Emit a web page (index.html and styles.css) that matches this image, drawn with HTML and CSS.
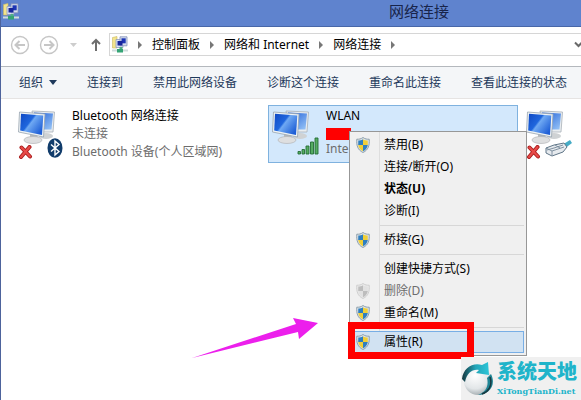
FILE: index.html
```html
<!DOCTYPE html>
<html lang="zh-CN">
<head>
<meta charset="utf-8">
<title>网络连接</title>
<link rel="stylesheet" href="styles.css">
</head>
<body>
<svg class="defs" aria-hidden="true">
  <defs>
    <linearGradient id="screen" x1="0" y1="0" x2="1" y2=".7">
      <stop offset="0" stop-color="#0f48c4"/><stop offset=".45" stop-color="#1f66dd"/><stop offset=".52" stop-color="#6fa9f3"/><stop offset="1" stop-color="#1f5fd6"/>
    </linearGradient>
    <linearGradient id="screen-back" x1="0" y1="0" x2="1" y2="1">
      <stop offset="0" stop-color="#1c5cd6"/><stop offset="1" stop-color="#9cc8f8"/>
    </linearGradient>
    <radialGradient id="ball" cx=".4" cy=".3" r=".8">
      <stop offset="0" stop-color="#ffffff"/><stop offset=".6" stop-color="#e2e6e8"/><stop offset="1" stop-color="#8f999d"/>
    </radialGradient>
    <linearGradient id="swoosh" x1="0" y1="0" x2="1" y2="0">
      <stop offset="0" stop-color="#16363e"/><stop offset=".5" stop-color="#23a5b8"/><stop offset="1" stop-color="#2cc5d8"/>
    </linearGradient>
    <symbol id="monitors" viewBox="0 0 38 34">
      <ellipse cx="28" cy="26" rx="7" ry="3" fill="#cfd2d4"/>
      <path d="M14 1 36.500 2 35 22 17 22Z" fill="#e9edf0" stroke="#a8b0b8" stroke-width=".8"/>
      <path d="M16 2.500 35 3.500 33.500 19.500 18 19.500Z" fill="url(#screen-back)"/>
      <path d="M12 23h7l1 7h-8Z" fill="#b6babd"/>
      <ellipse cx="15" cy="30" rx="9" ry="3.500" fill="#dedfe0" stroke="#b3b5b7" stroke-width=".7"/>
      <path d="M1.500 2 27 4 25.500 27 .5 22Z" fill="#eff3f5" stroke="#98a4b0" stroke-width=".8"/>
      <path d="M3 3.800 25.300 5.500 24 25 2.200 20.500Z" fill="url(#screen)"/>
    </symbol>
    <symbol id="cross" viewBox="0 0 14 14">
      <path d="M3 2.500 11.500 11.500M11 2 2.500 12" stroke="#a81d1d" stroke-width="4" stroke-linecap="round"/>
      <path d="M3 2.500 11.500 11.500M11 2 2.500 12" stroke="#e84a48" stroke-width="2.200" stroke-linecap="round"/>
    </symbol>
    <symbol id="shield" viewBox="0 0 14 16">
      <path d="M7 .5C5 2 3 2.300 .8 2.200.3 8 1.500 13 7 15.500 12.500 13 13.700 8 13.200 2.200 11 2.300 9 2 7 .5Z" fill="#dce3e8" stroke="#8497a5" stroke-width=".9"/>
      <path d="M7 2.300C5.500 3.300 4 3.600 2.300 3.600L2.200 8H7Z" fill="#2f7fc0"/>
      <path d="M7 2.300C8.500 3.300 10 3.600 11.700 3.600L11.800 8H7Z" fill="#f0cf38"/>
      <path d="M2.200 8C2.700 11 4.300 13 7 14.200V8Z" fill="#f0cf38"/>
      <path d="M11.800 8C11.300 11 9.700 13 7 14.200V8Z" fill="#2f7fc0"/>
    </symbol>
    <symbol id="network" viewBox="0 0 16 17">
      <path d="M.5 1.500 5 .5V12H.5Z" fill="#f3e48b" stroke="#c9b860" stroke-width=".6"/>
      <path d="M4 3.500h7v8H4Z" fill="#dce3f2" stroke="#8e9ac0" stroke-width=".8"/>
      <path d="M8 .8h7v9H8Z" fill="#d4dced" stroke="#8390b8" stroke-width=".8"/>
      <path d="M9.500 2.300h4.200v5H9.500Z" fill="#1d35b5"/>
      <path d="M5.500 5h5v4.500h-5Z" fill="#17259a"/>
      <path d="M7.500 11h3v2.500h-3Z" fill="#4fae83"/>
      <path d="M0 13.500h16v2H0Z" fill="#cfdcdc"/>
      <path d="M5 13h6v3.500H5Z" fill="#35a475"/>
    </symbol>
  </defs>
</svg>

<div class="window">
  <header class="titlebar">
    <svg class="title-icon" aria-hidden="true"><use href="#network"/></svg>
    <h1 class="title">网络连接</h1>
  </header>

  <nav class="nav">
    <button class="round" aria-label="后退"><svg viewBox="0 0 20 20"><circle cx="10" cy="10" r="8.500"/><path d="M15 10H6M9.500 6 5.500 10l4 4"/></svg></button>
    <button class="round" aria-label="前进"><svg viewBox="0 0 20 20"><circle cx="10" cy="10" r="8.500"/><path d="M5 10h9M10.500 6l4 4-4 4"/></svg></button>
    <button class="recent" aria-label="最近位置"><svg viewBox="0 0 7 4"><path d="M0 0h7L3.500 4Z"/></svg></button>
    <button class="up" aria-label="上移"><svg viewBox="0 0 10 14"><path d="M5 13V2M1 6l4-4 4 4"/></svg></button>
    <div class="address">
      <svg class="address-icon" aria-hidden="true"><use href="#network"/></svg>
      <i class="tri"></i><a href="#">控制面板</a>
      <i class="tri"></i><a href="#">网络和 Internet</a>
      <i class="tri"></i><a href="#">网络连接</a>
      <i class="tri"></i>
      <button class="history" aria-label="以前的位置"><svg viewBox="0 0 9 7"><path d="M1 1.500l3.500 3.500L8 1.500"/></svg></button>
    </div>
  </nav>

  <div class="toolbar">
    <button class="organize">组织<svg viewBox="0 0 8 5" aria-hidden="true"><path d="M0 0h8L4 5Z"/></svg></button>
    <button>连接到</button>
    <button>禁用此网络设备</button>
    <button>诊断这个连接</button>
    <button>重命名此连接</button>
    <button>查看此连接的状态</button>
  </div>

  <main class="content">
    <div class="tiles">
      <article class="tile">
        <div class="icon">
          <svg class="monitors"><use href="#monitors"/></svg>
          <svg class="badge-left"><use href="#cross"/></svg>
          <svg class="badge-bluetooth" viewBox="0 0 16 20"><ellipse cx="8" cy="10" rx="7.500" ry="9.800" fill="#113c6b"/><path d="M4 6.500l8 7L8 17V3l4 3.500-8 7" fill="none" stroke="#fff" stroke-width="1.400"/></svg>
        </div>
        <div class="info"><p class="name">Bluetooth 网络连接</p><p>未连接</p><p>Bluetooth 设备(个人区域网)</p></div>
      </article>
      <article class="tile selected">
        <div class="icon">
          <svg class="monitors"><use href="#monitors"/></svg>
          <svg class="badge-signal" viewBox="0 0 22 18"><g fill="#55ab62" stroke="#246d35" stroke-width=".9"><path d="M1 14.500h2.500v2.500H1ZM5 12.500h2.500V17H5ZM9 9h3v8H9ZM13.500 5h3v12h-3ZM18 1h3v16h-3Z"/></g></svg>
        </div>
        <div class="info"><p class="name">WLAN</p><p><span class="redacted"></span></p><p>Inte</p></div>
      </article>
      <article class="tile">
        <div class="icon">
          <svg class="monitors"><use href="#monitors"/></svg>
          <svg class="badge-left"><use href="#cross"/></svg>
          <svg class="badge-plug" viewBox="0 0 27 17"><path d="M17 5 25 0l2 3-8 6Z" fill="#45abc5"/><path d="M1 8l8-3 10-2 3 4-4 5-11 4-6-3Z" fill="#e6eaee" stroke="#5f7587" stroke-width="1"/><path d="M2 10l7-2 9-3M7 15V11l12-4M1 8l6 3M10 5l5 3" fill="none" stroke="#76899a" stroke-width=".9"/></svg>
        </div>
        <div class="info"><p class="name">以太网</p></div>
      </article>
    </div>

    <svg class="pointer" viewBox="0 0 126 42" aria-hidden="true"><path d="M0 41 104 7 101 1 126 6 107 22 106 15Z"/></svg>

    <div class="menu" role="menu">
      <button role="menuitem"><svg><use href="#shield"/></svg>禁用(B)</button>
      <button role="menuitem">连接/断开(O)</button>
      <button role="menuitem" class="default">状态(U)</button>
      <button role="menuitem">诊断(I)</button>
      <hr>
      <button role="menuitem"><svg><use href="#shield"/></svg>桥接(G)</button>
      <hr>
      <button role="menuitem">创建快捷方式(S)</button>
      <button role="menuitem" disabled><svg><use href="#shield"/></svg>删除(D)</button>
      <button role="menuitem"><svg><use href="#shield"/></svg>重命名(M)</button>
      <hr>
      <button role="menuitem" class="active"><svg><use href="#shield"/></svg>属性(R)</button>
      <span class="highlight"></span>
    </div>

    <aside class="brand">
      <svg viewBox="0 0 34 36" aria-hidden="true">
        <circle cx="17" cy="20" r="14" fill="url(#ball)"/>
        <path d="M1 18C2 7 12 1 21 4L27 1 28 14 15 12 18 9C11 8 6 12 4 21Z" fill="url(#swoosh)"/>
        <path d="M30 13C36 25 27 34 17 34 25 31 28 25 26 17Z" fill="#1e8494"/>
        <path d="M29 16C32 25 27 31 21 33" fill="none" stroke="#183940" stroke-width="1.500"/>
      </svg>
      <div><strong>系统天地</strong><small>XiTongTianDi.net</small></div>
    </aside>
  </main>
</div>
</body>
</html>
```
FILE: styles.css
```css
* { box-sizing: border-box; }
body {
  margin: 0;
  overflow: hidden;
  background: #fff;
  color: #000;
  font: 12px/18px "Noto Sans", "Noto Sans CJK SC", sans-serif;
}
p, h1 { margin: 0; }
svg { display: block; flex: none; }
button {
  display: flex;
  align-items: center;
  flex: none;
  padding: 0;
  border: 0;
  background: none;
  color: inherit;
  font: inherit;
  white-space: nowrap;
}
a { color: inherit; text-decoration: none; white-space: nowrap; }
.defs { position: absolute; width: 0; height: 0; }

.window {
  display: flex;
  flex-direction: column;
  min-height: 100vh;
  border-left: 1px solid #4d639c;
}

.titlebar {
  display: flex;
  align-items: center;
  height: 27px;
  padding: 0 0 4px 2px;
  background: #5f83ce;
  border-bottom: 1px solid #4867a8;
}
.title-icon { width: 16px; height: 17px; }
.title {
  margin-left: 370px;
  color: #18244a;
  font-size: 15px;
  font-weight: 400;
  line-height: 22px;
  white-space: nowrap;
}

.nav { display: flex; align-items: center; height: 39px; padding: 0 0 4px 9px; }
.round { margin-right: 9px; }
.round svg { width: 20px; height: 20px; fill: none; stroke: #c6c6c6; stroke-width: 1.400; }
.round path { stroke-width: 2; }
.recent { margin-left: 2px; }
.recent svg { width: 7px; height: 4px; fill: #cdcdcd; }
.up { margin: 0 8px 0 14px; }
.up svg { width: 10px; height: 14px; fill: none; stroke: #6e6e6e; stroke-width: 2; }
.address {
  display: flex;
  align-items: center;
  flex: 1;
  height: 23px;
  padding-left: 2px;
  border: 1px solid #d6d6d6;
  border-right: 0;
}
.address-icon { width: 16px; height: 17px; }
.tri {
  flex: none;
  margin: 0 10px;
  border: solid transparent;
  border-width: 4px 0 4px 4px;
  border-left-color: #777;
}
.history { margin-left: auto; margin-right: -2px; }
.history svg { width: 9px; height: 7px; fill: none; stroke: #6a6a6a; stroke-width: 2; }

.toolbar {
  display: flex;
  align-items: center;
  gap: 30px;
  height: 33px;
  padding-left: 18px;
  background: #f4f6f8;
  border-top: 1px solid #b4b8bd;
  border-bottom: 1px solid #e6e4e3;
  color: #1e395b;
}
.organize { gap: 6px; }
.organize svg { width: 8px; height: 5px; fill: #1e395b; }

.content { position: relative; flex: 1; padding: 6px 0 0 13px; }
.tiles { display: flex; gap: 4px; overflow: hidden; }
.tile {
  display: flex;
  flex: none;
  gap: 8px;
  width: 250px;
  height: 58px;
  padding: 1px 3px;
  border: 1px solid transparent;
}
.selected { background: #d3e8fc; border-color: #7fb2df; }
.icon { position: relative; flex: none; width: 46px; }
.monitors { width: 38px; height: 34px; margin-top: 3px; }
.badge-left { position: absolute; left: 0; top: 38px; width: 15px; height: 14px; }
.badge-bluetooth { position: absolute; left: 29px; top: 31px; width: 16px; height: 20px; }
.badge-signal { position: absolute; left: 25px; top: 30px; width: 22px; height: 18px; }
.badge-plug { position: absolute; left: 19px; top: 33px; width: 27px; height: 17px; }
.info { color: #6d6d6d; white-space: nowrap; }
.name { color: #000; }
.redacted { display: block; width: 25px; height: 12px; margin-top: 3px; background: #f00; }

.pointer { position: absolute; left: 191px; top: 218px; width: 126px; height: 42px; fill: #ec1fec; }

.menu {
  position: absolute;
  left: 348px;
  top: 32px;
  width: 178px;
  padding: 2px;
  border: 1px solid #979797;
  background: linear-gradient(90deg, #f0f0f0 29px, #dedede 29px, #dedede 30px, #f0f0f0 30px);
}
.menu button {
  position: relative;
  width: 100%;
  height: 22px;
  padding-left: 32px;
}
.menu svg { position: absolute; left: 4px; width: 14px; height: 16px; }
.menu hr { height: 1px; margin: 3px 0 3px 28px; border: 0; background: #d7d7d7; }
.menu .default { font-weight: 700; }
.menu button:disabled { color: #6d6d6d; }
.menu button:disabled svg { filter: grayscale(1); opacity: .4; }
.menu .active { background: #d1e2f2; outline: 1px solid #78aee5; outline-offset: -1px; }
.highlight {
  position: absolute;
  left: -2px;
  bottom: -4px;
  width: 126px;
  height: 37px;
  border: 7px solid #f00;
}

.brand {
  position: absolute;
  right: 0;
  bottom: 0;
  display: flex;
  align-items: center;
  gap: 2px;
  width: 120px;
  height: 43px;
  background: #f0f0f0;
  color: #20b4ca;
}
.brand svg { width: 34px; height: 36px; }
.brand strong { display: block; font-size: 20px; font-weight: 900; line-height: 24px; white-space: nowrap; }
.brand small { display: block; font: 700 8px/14px "DejaVu Serif", serif; white-space: nowrap; }
```
